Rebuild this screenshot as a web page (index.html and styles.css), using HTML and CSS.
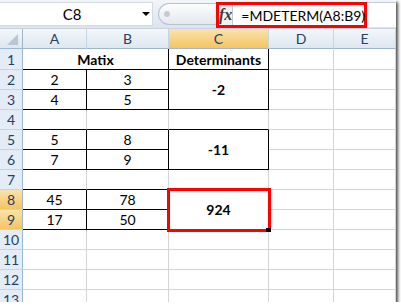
FILE: index.html
```html
<!DOCTYPE html>
<html lang="en">
<head>
  <meta charset="UTF-8" />
  <title>MDETERM</title>
  <link rel="stylesheet" href="styles.css">
</head>
<body>

<div class="sheet">
  <div class="fbar">
    <div class="namebox">
      <span class="ref">C8</span>
      <span class="drop"></span>
    </div>
    <div class="knob"><div class="pill"><span class="dot"></span></div></div>
    <div class="input">
      <div class="mark">
        <span class="fx">fx</span>
        <span class="formula">=MDETERM(A8:B9)</span>
      </div>
    </div>
  </div>

  <div class="grid">
    <div class="corner"></div><div class="hd">A</div><div class="hd">B</div><div class="hd sel">C</div><div class="hd">D</div><div class="hd">E</div>

    <div class="rh">1</div><div class="span2 b br bb">Matix</div><div class="b br bb">Determinants</div><div></div><div></div>
    <div class="rh">2</div><div class="br bb">2</div><div class="br bb">3</div><div class="rspan2 mid b br bb">-2</div><div></div><div></div>
    <div class="rh">3</div><div class="br bb">4</div><div class="br bb">5</div><div></div><div></div>
    <div class="rh">4</div><div class="bb"></div><div class="bb"></div><div class="bb"></div><div></div><div></div>
    <div class="rh">5</div><div class="br bb">5</div><div class="br bb">8</div><div class="rspan2 mid b br bb">-11</div><div></div><div></div>
    <div class="rh">6</div><div class="br bb">7</div><div class="br bb">9</div><div></div><div></div>
    <div class="rh">7</div><div class="bb"></div><div class="bb"></div><div class="bb"></div><div></div><div></div>
    <div class="rh sel">8</div><div class="br bb">45</div><div class="br bb">78</div><div class="rspan2 mid b br bb pick">924</div><div></div><div></div>
    <div class="rh sel">9</div><div class="br bb">17</div><div class="br bb">50</div><div></div><div></div>
    <div class="rh">10</div><div></div><div></div><div></div><div></div><div></div>
    <div class="rh">11</div><div></div><div></div><div></div><div></div><div></div>
    <div class="rh">12</div><div></div><div></div><div></div><div></div><div></div>
    <div class="rh">13</div><div></div><div></div><div></div><div></div><div></div>
  </div>
</div>

</body>
</html>
```

FILE: styles.css
```css
* {
  box-sizing: border-box;
}

body {
  margin: 0;
  background: #fff;
  font-family: Lato, 'Open Sans', sans-serif;
}

.sheet {
  width: 396px;
  height: 302px;
  overflow: hidden;
  background: #fff;
  box-shadow: 2px 2px 3px rgba(0, 0, 0, 0.7);
}

/* formula bar */
.fbar {
  display: flex;
  height: 29px;
  background: linear-gradient(#f2f5f9, #dde4ec);
  border-bottom: 1px solid #c8d2de;
}

.namebox {
  width: 153px;
  margin: 2px 0 2px;
  background: #fff;
  border: 1px solid #d3dae3;
  border-left: 0;
  display: flex;
  align-items: center;
}

.ref {
  flex: 1;
  text-align: center;
  font-size: 15px;
  padding-left: 2px;
}

.drop {
  width: 0;
  height: 0;
  margin-right: 2px;
  border-left: 4px solid transparent;
  border-right: 4px solid transparent;
  border-top: 4px solid #000;
}

.knob {
  width: 63px;
  display: flex;
  align-items: center;
  padding-left: 5px;
}

.pill {
  flex: 1;
  height: 22px;
  border: 1px solid #b7c2cf;
  border-right: 0;
  border-radius: 11px 0 0 11px;
  background: linear-gradient(#fdfdfe, #e3e8ee);
  display: flex;
  align-items: center;
  padding-left: 5px;
}

.dot {
  width: 6px;
  height: 6px;
  border-radius: 50%;
  background: #c5cbd2;
}

.input {
  flex: 1;
  margin: 2px 0 1px;
  background: #fff;
  border-top: 1px solid #c3ccd8;
}

.mark {
  width: 151px;
  height: 26px;
  margin-top: -1px;
  border: 3px solid #f00;
  display: flex;
  align-items: center;
}

.fx {
  width: 23px;
  align-self: stretch;
  background: #eef1f5;
  border-right: 1px solid #c3cad3;
  font: italic bold 16px 'Liberation Serif', serif;
  color: #3c3c3c;
  display: flex;
  align-items: center;
  justify-content: center;
}

.formula {
  padding-left: 8px;
  font-size: 14px;
  color: #000;
}

/* cells */
.grid {
  display: grid;
  grid-template-columns: 23px 64px 82px 100px 65px 62px;
  grid-template-rows: 20px 21px;
  grid-auto-rows: 20px;
}

.grid > div {
  border-right: 1px solid #d4d4d4;
  border-bottom: 1px solid #d4d4d4;
  display: flex;
  align-items: flex-end;
  justify-content: center;
  padding-bottom: 1px;
  font-size: 14px;
  line-height: 16px;
  color: #000;
}

.grid > .hd {
  background: linear-gradient(#f4f7fb, #dee6f0);
  border-right-color: #c6d3e2;
  border-bottom-color: #9eb6ce;
  align-items: center;
  padding: 0;
  color: #27415f;
}

.grid > .rh {
  background: #e4ecf7;
  border-right-color: #9eb6ce;
  border-bottom-color: #c6d3e2;
  color: #27415f;
}

.grid > .corner {
  background: linear-gradient(#f4f7fb, #dee6f0);
  border-right-color: #9eb6ce;
  border-bottom-color: #9eb6ce;
  position: relative;
}

.corner::after {
  content: '';
  position: absolute;
  right: 4px;
  bottom: 3px;
  border-left: 11px solid transparent;
  border-bottom: 11px solid #b7c5d6;
}

.grid > .sel {
  background: linear-gradient(#fae3ab, #f3c462);
}

.span2 {
  grid-column: span 2;
}

.rspan2 {
  grid-row: span 2;
}

.grid > .mid {
  align-items: center;
  padding: 0;
}

.b {
  font-weight: bold;
}

.grid > .br {
  border-right-color: #000;
}

.grid > .bb {
  border-bottom-color: #000;
}

.pick {
  position: relative;
  outline: 3px solid #f00;
  outline-offset: -1px;
}

.pick::after {
  content: '';
  position: absolute;
  right: -3px;
  bottom: -3px;
  width: 5px;
  height: 4px;
  background: #000;
}
```
